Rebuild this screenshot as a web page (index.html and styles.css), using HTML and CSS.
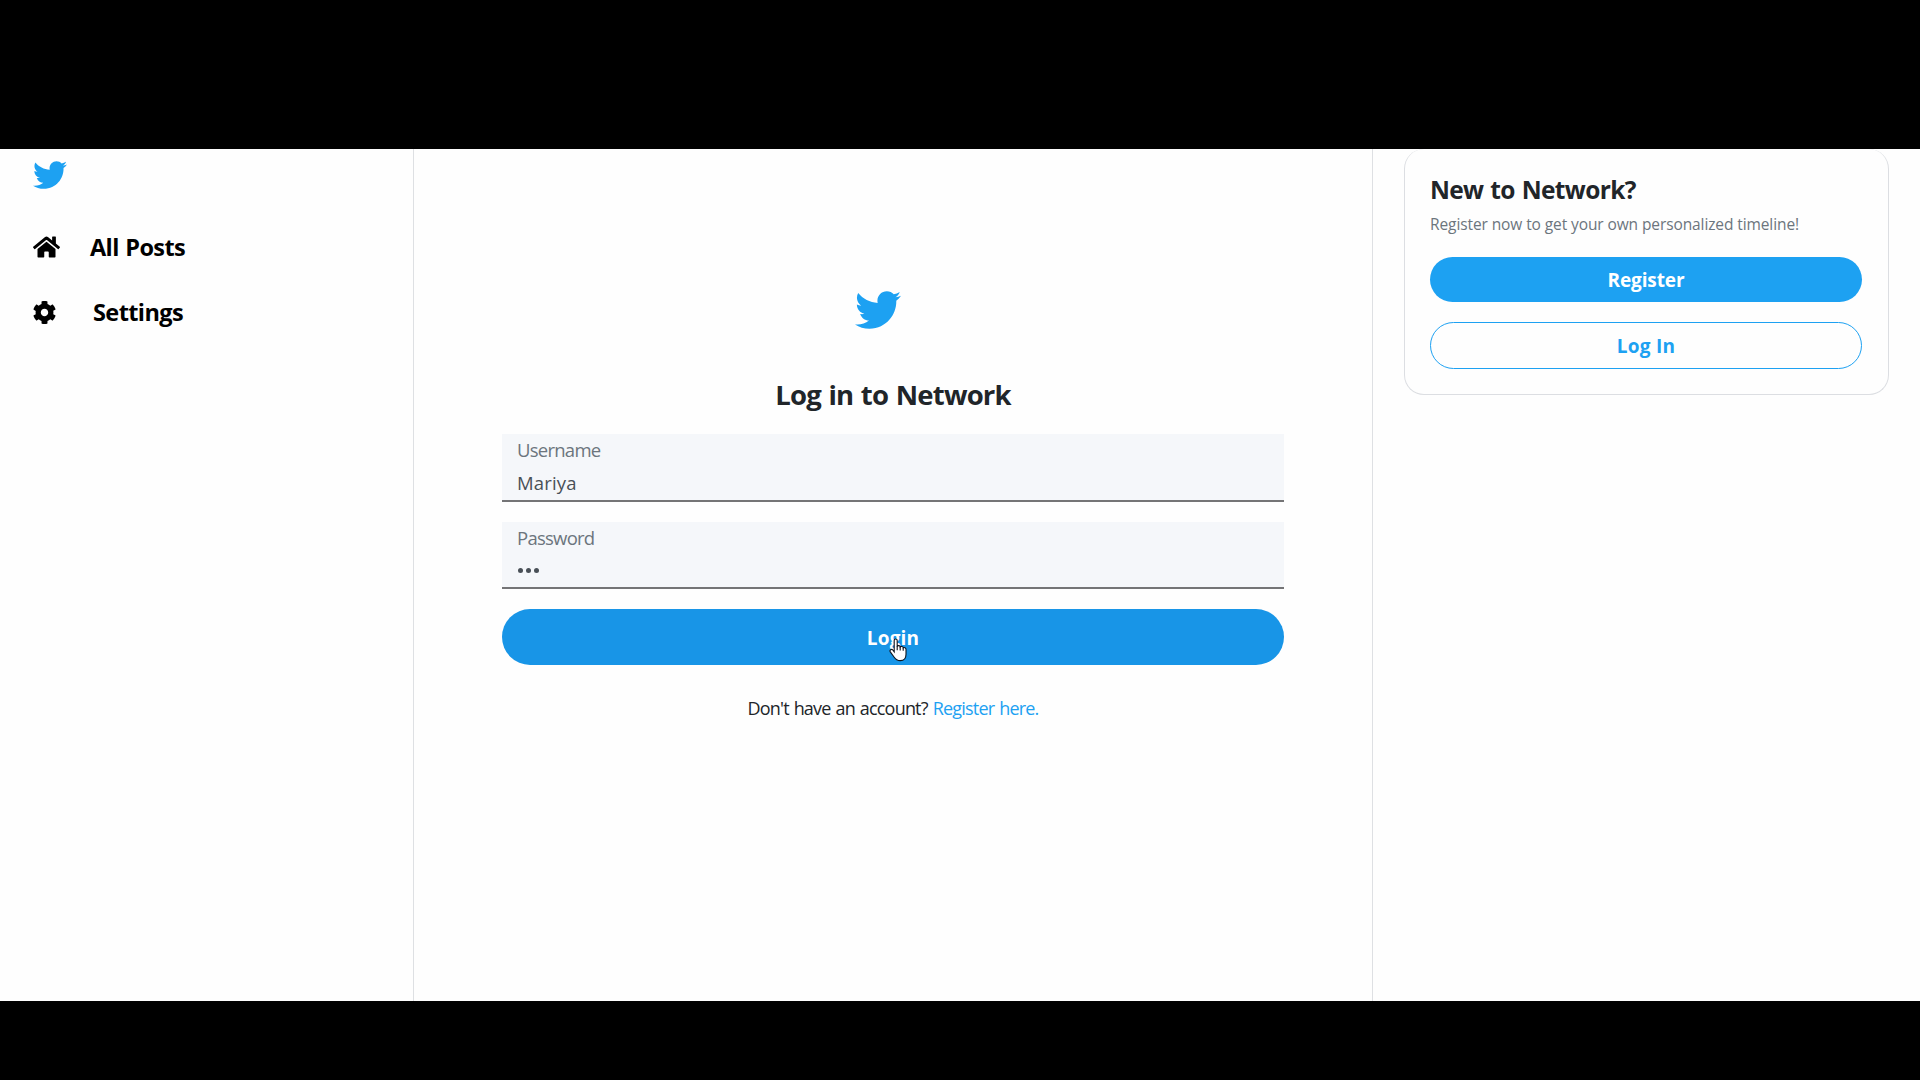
FILE: index.html
```html
<!DOCTYPE html>
<html lang="en">
<head>
<meta charset="utf-8">
<title>Network</title>
<link rel="stylesheet" href="styles.css">
</head>
<body>
<svg width="0" height="0" class="defs">
  <symbol id="bird" viewBox="0 48 512 416"><path d="M459.37 151.716c.325 4.548.325 9.097.325 13.645 0 138.72-105.583 298.558-298.558 298.558-59.452 0-114.68-17.219-161.137-47.106 8.447.974 16.568 1.299 25.34 1.299 49.055 0 94.213-16.568 130.274-44.832-46.132-.975-84.792-31.188-98.112-72.772 6.498.974 12.995 1.624 19.818 1.624 9.421 0 18.843-1.3 27.614-3.573-48.081-9.747-84.143-51.98-84.143-102.985v-1.299c13.969 7.797 30.214 12.67 47.431 13.319-28.264-18.843-46.781-51.005-46.781-87.391 0-19.492 5.197-37.36 14.294-52.954 51.655 63.675 129.3 105.258 216.365 109.807-1.624-7.797-2.599-15.918-2.599-24.04 0-57.828 46.782-104.934 104.934-104.934 30.213 0 57.502 12.67 76.67 33.137 23.715-4.548 46.456-13.32 66.599-25.34-7.798 24.366-24.366 44.833-46.132 57.827 21.117-2.273 41.584-8.122 60.426-16.243-14.292 20.791-32.161 39.308-52.628 54.253z"/></symbol>
</svg>
<div class="page">
  <nav class="sidebar">
    <svg class="logo"><use href="#bird"/></svg>
    <a class="item">
      <svg class="home" viewBox="0 32 576 448"><path d="M280.37 148.26L96 300.11V464a16 16 0 0 0 16 16l112.06-.29a16 16 0 0 0 15.92-16V368a16 16 0 0 1 16-16h64a16 16 0 0 1 16 16v95.64a16 16 0 0 0 16 16.05L464 480a16 16 0 0 0 16-16V300L295.67 148.26a12.19 12.19 0 0 0-15.3 0zM571.6 251.47L488 182.56V44.05a12 12 0 0 0-12-12h-56a12 12 0 0 0-12 12v72.61L318.47 43a48 48 0 0 0-61 0L4.34 251.47a12 12 0 0 0-1.6 16.9l25.5 31A12 12 0 0 0 45.15 301l235.22-193.74a12.19 12.19 0 0 1 15.3 0L530.9 301a12 12 0 0 0 16.9-1.6l25.5-31a12 12 0 0 0-1.7-16.93z"/></svg>
      <span>All Posts</span>
    </a>
    <a class="item">
      <svg class="gear" viewBox="12 8 488 496"><path d="M487.4 315.7l-42.6-24.6c4.3-23.2 4.3-47 0-70.2l42.6-24.6c4.9-2.8 7.1-8.6 5.5-14-11.1-35.6-30-67.8-54.7-94.6-3.8-4.1-10-5.1-14.8-2.3L380.8 110c-17.9-15.4-38.5-27.3-60.8-35.1V25.8c0-5.6-3.9-10.5-9.4-11.7-36.7-8.2-74.3-7.8-109.2 0-5.5 1.2-9.4 6.1-9.4 11.7V75c-22.2 7.9-42.8 19.8-60.8 35.1L88.7 85.5c-4.9-2.8-11-1.9-14.8 2.3-24.7 26.7-43.6 58.9-54.7 94.6-1.7 5.4.6 11.2 5.5 14L67.3 221c-4.3 23.2-4.3 47 0 70.2l-42.6 24.6c-4.9 2.8-7.1 8.6-5.5 14 11.1 35.6 30 67.8 54.7 94.6 3.8 4.1 10 5.1 14.8 2.3l42.6-24.6c17.9 15.4 38.5 27.3 60.8 35.1v49.2c0 5.6 3.9 10.5 9.4 11.7 36.7 8.2 74.3 7.8 109.2 0 5.5-1.2 9.4-6.1 9.4-11.7v-49.2c22.2-7.9 42.8-19.8 60.8-35.1l42.6 24.6c4.9 2.8 11 1.9 14.8-2.3 24.7-26.7 43.6-58.9 54.7-94.6 1.5-5.5-.7-11.3-5.6-14.1zM256 336c-44.1 0-80-35.9-80-80s35.9-80 80-80 80 35.9 80 80-35.9 80-80 80z"/></svg>
      <span>Settings</span>
    </a>
  </nav>
  <main class="main">
    <svg class="big-logo"><use href="#bird"/></svg>
    <h1>Log in to Network</h1>
    <div class="field">
      <label>Username</label>
      <div class="value">Mariya</div>
    </div>
    <div class="field second">
      <label>Password</label>
      <div class="dots"><i></i><i></i><i></i></div>
    </div>
    <button class="login">Login
      <svg class="cursor" viewBox="0 0 18 24"><path d="M5.2 2.6C5.2.5 8.2.5 8.2 2.6V8.4C8.8 7.2 11 7.4 11.2 9 12 8 14 8.3 14.2 9.8 15.2 9.1 17 9.8 17 11.3V16.2C17 20.4 14.6 22.6 11.3 22.6 8 22.6 6.5 21.3 5.2 19.2L1.3 13.9C.2 12 2.6 10.6 3.8 12L5.2 13.8Z"/><path d="M8.2 8V12.2M11.2 9V12.6M14.2 10V12.8"/></svg>
    </button>
    <p class="foot"><span>Don't have an account?</span><a>Register here.</a></p>
  </main>
  <aside class="aside">
    <section class="card">
      <h2>New to Network?</h2>
      <p>Register now to get your own personalized timeline!</p>
      <button class="pill fill">Register</button>
      <button class="pill line">Log In</button>
    </section>
  </aside>
</div>
</body>
</html>
```
FILE: styles.css
```css
* { box-sizing: border-box; }
body {
  margin: 0;
  height: 1080px;
  padding: 149px 0 79px;
  background: #000;
  overflow: hidden;
  font-family: "Open Sans", "Noto Sans", sans-serif;
  color: #212529;
}
.defs { position: absolute; }
svg { display: block; flex: none; }
h1, h2, p { margin: 0; white-space: nowrap; }
button { font-family: inherit; border: 0; padding: 0; display: flex; justify-content: center; }
.page {
  height: 852px;
  background: #fefefe;
  display: grid;
  grid-template-columns: 414px 959px 1fr;
}
.sidebar { border-right: 1px solid #dee0e3; padding: 12px 0 0 33px; color: #000; }
.logo { width: 34px; height: 28px; fill: #1da1f2; margin-bottom: 38px; }
.item {
  display: flex;
  align-items: center;
  height: 40px;
  margin-bottom: 25px;
  font-size: 23.5px;
  line-height: 40px;
  font-weight: 700;
  letter-spacing: -.6px;
  word-spacing: 1px;
}
.home { width: 27px; height: 22px; margin-right: 30px; }
.gear { width: 23px; height: 23px; margin-right: 37px; }
.main {
  border-right: 1px solid #dee0e3;
  padding: 142px 88px 0;
  display: flex;
  flex-direction: column;
}
.big-logo { width: 46px; height: 38px; fill: #1da1f2; margin-left: 353px; }
h1 {
  margin-top: 46px;
  height: 59px;
  text-align: center;
  font-size: 27.5px;
  line-height: 40px;
  font-weight: 700;
  letter-spacing: -.8px;
  word-spacing: 1.2px;
}
.field {
  height: 68px;
  background: #f5f7fa;
  border-bottom: 2px solid #747476;
  padding: 0 15px;
  font-size: 18.5px;
  color: #495057;
}
.field label { display: block; height: 32px; line-height: 32px; color: #6c757d; letter-spacing: -.75px; }
.value { line-height: 33px; letter-spacing: .15px; }
.second { height: 67px; margin-top: 20px; }
.dots { display: flex; gap: 3px; padding: 14px 0 0 1px; }
.dots i { width: 5px; height: 5px; border-radius: 50%; background: #495057; }
.login {
  position: relative;
  margin-top: 20px;
  height: 56px;
  border-radius: 28px;
  background: #1895e7;
  color: #fff;
  font-size: 19px;
  line-height: 58px;
  font-weight: 700;
  letter-spacing: .2px;
}
.cursor {
  position: absolute;
  left: 387px;
  top: 29px;
  width: 18px;
  height: 24px;
  fill: #fff;
  stroke: #10151c;
  stroke-width: 1.1;
}
.foot {
  display: flex;
  justify-content: center;
  gap: 5px;
  margin-top: 28px;
  font-size: 18px;
  line-height: 30px;
  letter-spacing: -.8px;
  word-spacing: 1px;
}
.foot a { color: #1da1f2; }
.aside { padding: 0 31px; }
.card { height: 246px; border: 1px solid #dcdee2; border-top: 0; border-radius: 20px; padding: 20px 26px 0 25px; }
h2 { font-size: 24.5px; line-height: 41px; height: 42px; font-weight: 700; letter-spacing: -.65px; word-spacing: 1.2px; }
.card p { font-size: 15.5px; line-height: 26px; height: 46px; color: #6c757d; letter-spacing: -.1px; }
.pill { width: 100%; border-radius: 24px; font-size: 19px; font-weight: 700; }
.fill { height: 45px; line-height: 46px; background: #1da1f2; color: #fff; letter-spacing: -.1px; }
.line {
  height: 47px;
  line-height: 46px;
  margin-top: 20px;
  border: 1px solid #1da1f2;
  background: transparent;
  color: #1da1f2;
  letter-spacing: .3px;
}
```
